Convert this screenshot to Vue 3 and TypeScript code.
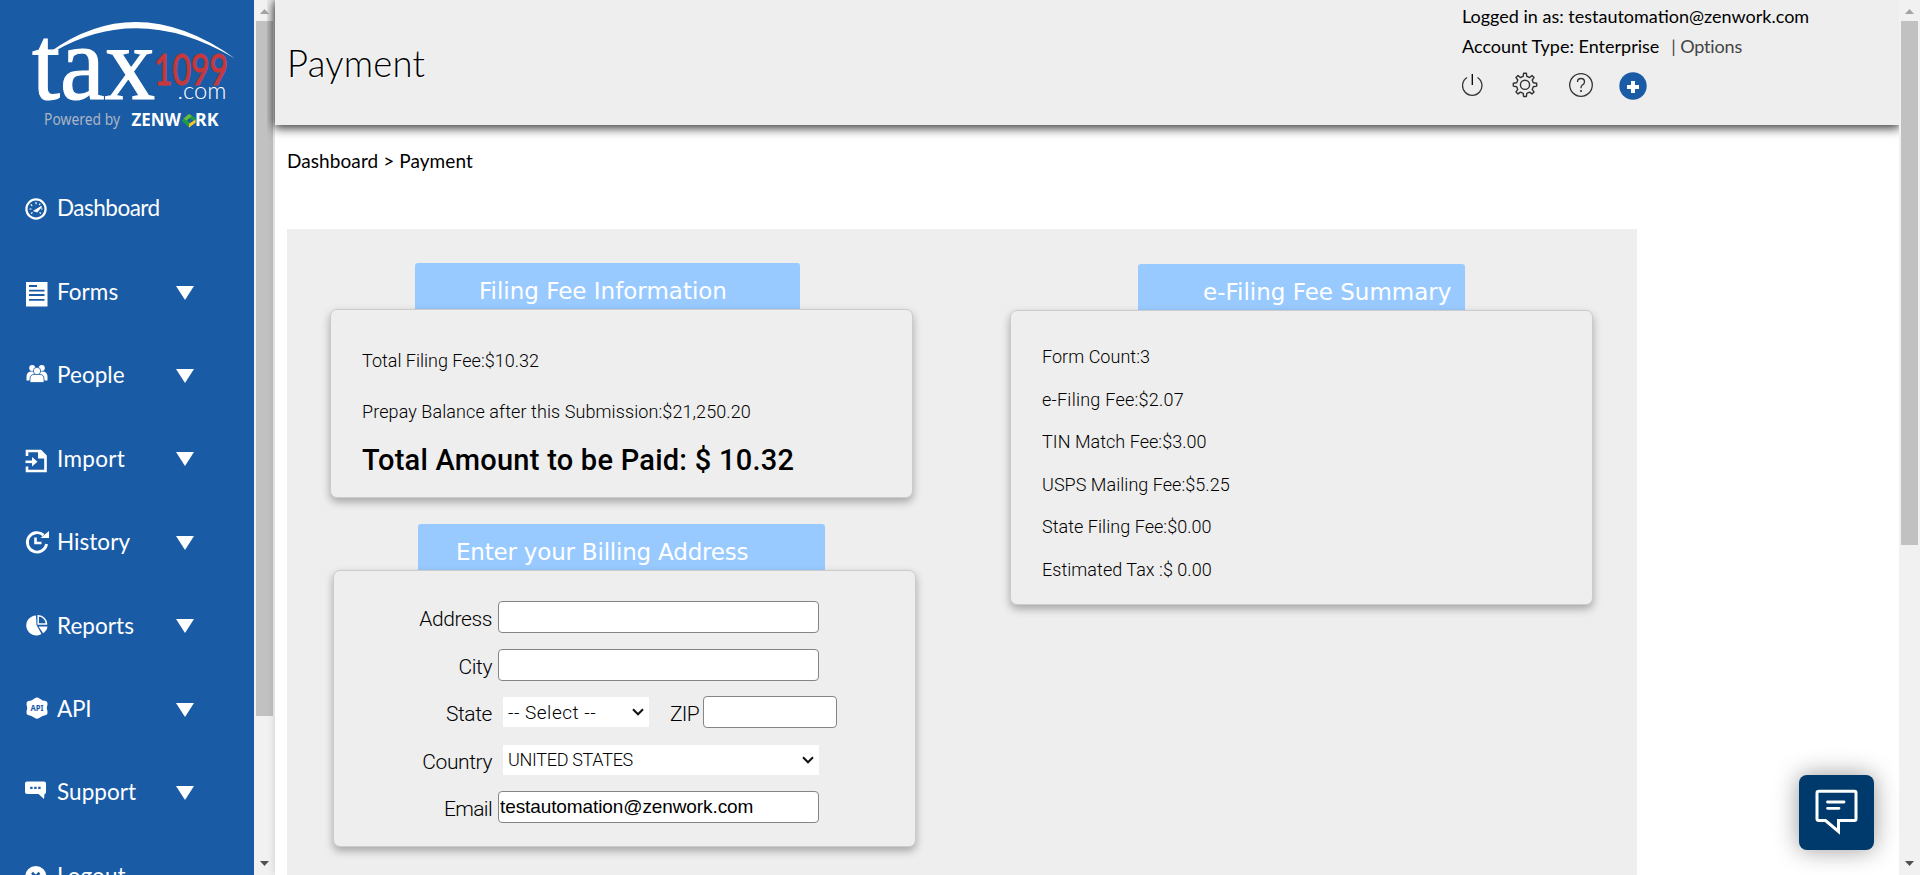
<script setup lang="ts">
import { ref } from 'vue'

interface NavItem { label: string; icon: string; open: boolean }

const nav: NavItem[] = [
  { label: 'Dashboard', icon: 'gauge', open: false },
  { label: 'Forms', icon: 'forms', open: true },
  { label: 'People', icon: 'people', open: true },
  { label: 'Import', icon: 'import', open: true },
  { label: 'History', icon: 'history', open: true },
  { label: 'Reports', icon: 'reports', open: true },
  { label: 'API', icon: 'api', open: true },
  { label: 'Support', icon: 'support', open: true },
  { label: 'Logout', icon: 'logout', open: false },
]

const summary: string[] = [
  'Form Count:3',
  'e-Filing Fee:$2.07',
  'TIN Match Fee:$3.00',
  'USPS Mailing Fee:$5.25',
  'State Filing Fee:$0.00',
  'Estimated Tax :$ 0.00',
]

const address = ref('')
const city = ref('')
const zip = ref('')
const state = ref('-- Select --')
const country = ref('UNITED STATES')
const email = ref('testautomation@zenwork.com')
</script>

<template>
  <div class="page">
    <aside class="sidebar">
      <svg class="logo" width="254" height="166" viewBox="0 0 254 166">
        <path d="M50 52 Q138 -11 235 58.500 Q140 2 55 51 Z" fill="#fff" />
        <text x="32" y="98.500" class="logo-tax" textLength="123" lengthAdjust="spacingAndGlyphs">tax</text>
        <text x="154" y="85" class="logo-num" textLength="74" lengthAdjust="spacingAndGlyphs">1099</text>
        <text x="177.500" y="99" class="logo-com" textLength="49" lengthAdjust="spacingAndGlyphs">.com</text>
        <text x="44" y="125" class="logo-by" textLength="76" lengthAdjust="spacingAndGlyphs">Powered by</text>
        <text x="131.500" y="126" class="logo-zen" textLength="49.500" lengthAdjust="spacingAndGlyphs">ZENW</text>
        <text x="195" y="126" class="logo-zen" textLength="23.500" lengthAdjust="spacingAndGlyphs">RK</text>
        <path d="M181.500 120.500 L189 114 L195.500 118 V122 L189 118 L187 120.500 L190 123 L189 127.500 Z" fill="#1f9a45" />
        <path d="M183.500 118.500 L189 114 L192 116 L186.500 120.500 Z" fill="#6dbb3c" />
        <path d="M195.500 119.500 V122.800 L189 127.800 V123.800 Z" fill="#f5c526" />
      </svg>
      <nav>
        <a v-for="item in nav" :key="item.label" class="nav-row">
          <svg class="nav-icon" width="26" height="28" viewBox="0 0 26 28">
            <g v-if="item.icon === 'gauge'">
              <circle cx="12" cy="15" r="9.600" fill="none" stroke="#fff" stroke-width="2.200" />
              <path d="M10.500 16.800 L17.500 12.500 L13 17.600 Z" fill="#fff" stroke="#fff" stroke-width="1.400" />
              <path d="M5.500 15h2M6.800 10.500l1.400 1.200M12 8v2.200M16.200 9.600l-1 1.400M7 19.500l1.500-1M17 19.500l-1.500-1M18.500 15h-1.500" stroke="#fff" stroke-width="1.200" />
            </g>
            <g v-else-if="item.icon === 'forms'">
              <rect x="2" y="5" width="21.500" height="24.500" fill="#fff" />
              <path d="M5 9h8M5 13.600h15.500M5 18h15.500M5 22.800h15.500" stroke="#1a5ba6" stroke-width="1.800" />
            </g>
            <g v-else-if="item.icon === 'people'" fill="#fff">
              <circle cx="8.200" cy="8" r="3" /><circle cx="17.800" cy="8" r="3" />
              <path d="M2.500 20.500 V17 Q2.500 11.500 7.500 11.500 H18.500 Q23.500 11.500 23.500 17 V20.500 Z" />
              <path d="M6 22.500 V19 Q6 14.500 10 14.500 H16 Q20 14.500 20 19 V22.500 Z" stroke="#1a5ba6" stroke-width=".8" />
              <circle cx="13" cy="11" r="3.700" stroke="#1a5ba6" stroke-width=".8" />
            </g>
            <g v-else-if="item.icon === 'import'">
              <path d="M3 12 V7 H16.500 L21.500 12 V27 H3 V22.500" fill="none" stroke="#fff" stroke-width="2.600" />
              <path d="M14 6 L22.500 14.500 H14 Z" fill="#fff" />
              <path d="M1.500 17.800 H9" stroke="#fff" stroke-width="2.600" />
              <path d="M8 13 L13.500 17.800 L8 22.600 Z" fill="#fff" />
            </g>
            <g v-else-if="item.icon === 'history'">
              <path d="M19.500 8.100 A9.700 9.700 0 1 0 22.600 17" fill="none" stroke="#fff" stroke-width="2.800" />
              <path d="M16.500 11 H25 V4 Z" fill="#fff" />
              <path d="M11.500 10.500 V16 H17.500" fill="none" stroke="#fff" stroke-width="2.600" />
            </g>
            <g v-else-if="item.icon === 'reports'">
              <path d="M12 4.500 A10 10 0 1 0 17.500 23 L12.500 14 Z" fill="#fff" />
              <path d="M14.200 4.700 A8.500 8.500 0 0 1 22.500 13 H14.200 Z" fill="none" stroke="#fff" stroke-width="1.500" />
              <path d="M14.500 15.500 H23.500 Q23 19.500 19.200 22.200 Z" fill="#fff" />
            </g>
            <g v-else-if="item.icon === 'api'">
              <path d="M10.500 4.400 Q13 2.600 15.500 4.400 Q18.500 7 22 7 Q24 8 23.500 10.500 Q22 14 23.500 17.500 Q24 20 22 21 Q18.500 21.500 15.500 23.800 Q13 25.500 10.500 23.800 Q7.500 21.500 4 21 Q2 20 2.500 17.500 Q4 14 2.500 10.500 Q2 8 4 7 Q7.500 7 10.500 4.400 Z" fill="#fff" />
              <text x="6.500" y="17.300" class="api-text" textLength="13" lengthAdjust="spacingAndGlyphs">API</text>
            </g>
            <g v-else-if="item.icon === 'support'">
              <path d="M3 4.500 H20 Q22 4.500 22 6.500 V15 Q22 17 20.500 17 L20 22 L14.500 17 H3 Q1 17 1 15 V6.500 Q1 4.500 3 4.500 Z" fill="#fff" />
              <path d="M6.200 10.800h2.400M10.200 10.800h2.400M14.200 10.800h2.400" stroke="#1a5ba6" stroke-width="2.200" />
            </g>
            <g v-else>
              <circle cx="11.800" cy="15.500" r="10.500" fill="#fff" />
              <path d="M8 11.800 L15.500 19.200 M15.500 11.800 L8 19.200" stroke="#1a5ba6" stroke-width="2.600" />
            </g>
          </svg>
          <span class="nav-label" :class="'label-' + item.icon">{{ item.label }}</span>
          <svg v-if="item.open" class="caret" width="18" height="14" viewBox="0 0 18 14">
            <path d="M0 0 H18 L9 14 Z" fill="#fff" />
          </svg>
        </a>
      </nav>
    </aside>

    <div class="scroll">
      <svg class="sb-arrow" width="9" height="5" viewBox="0 0 9 5"><path d="M0 5 L4.500 0 L9 5Z" fill="#a3a3a3" /></svg>
      <div class="thumb side-thumb"></div>
      <svg class="sb-arrow down" width="9" height="5" viewBox="0 0 9 5"><path d="M0 0 H9 L4.500 5Z" fill="#505050" /></svg>
    </div>

    <main class="content">
      <header class="top">
        <h1>Payment</h1>
        <div class="account">
          <div class="acc-line">Logged in as: testautomation@zenwork.com</div>
          <div class="acc-line second">
            <span>Account Type: Enterprise</span><a class="options">| Options</a>
          </div>
          <div class="tools">
            <svg width="24" height="28" viewBox="0 0 24 28" fill="none" stroke="#333" stroke-width="1.300">
              <path d="M5 6.500 A9.700 9.700 0 1 0 15.500 6.500" /><path d="M10.300 3 V14" stroke="#000" />
            </svg>
            <svg width="28" height="28" viewBox="0 0 28 28" fill="none" stroke="#333" stroke-width="1.400" stroke-linejoin="round">
              <path d="M12.200 5.300 L12.600 2.300 H15.400 L15.800 5.300 L18.600 6.500 L21 4.600 L23 6.600 L21.200 9 L22.300 11.700 L25.700 12.300 V15.100 L22.300 15.700 L21.200 18.400 L23 20.900 L21 22.900 L18.600 21.100 L15.800 22.300 L15.400 25.500 H12.600 L12.200 22.300 L9.400 21.100 L7 22.900 L5 20.900 L6.800 18.400 L5.700 15.700 L2.300 15.100 V12.300 L5.700 11.700 L6.800 9 L5 6.600 L7 4.600 L9.400 6.500 Z" />
              <circle cx="14" cy="13.800" r="4.600" />
            </svg>
            <svg width="28" height="28" viewBox="0 0 28 28" fill="none" stroke="#333" stroke-width="1.300">
              <circle cx="14" cy="14" r="11.300" />
              <path d="M10.500 11 Q10.500 7.500 14 7.500 Q17.500 7.500 17.500 10.700 Q17.500 12.800 15.600 13.800 Q14 14.700 14 16.800 V17.300" />
              <path d="M14 19 V21" stroke-width="1.600" />
            </svg>
            <svg width="28" height="28" viewBox="0 0 28 28">
              <circle cx="14" cy="14" r="13.700" fill="#1a5ba6" />
              <path d="M14 9 V21 M8 15 H20" stroke="#fff" stroke-width="4" />
            </svg>
          </div>
        </div>
      </header>

      <div class="crumbs">Dashboard &gt; Payment</div>

      <section class="panel">
        <div class="left">
          <div class="tab tab-fee">Filing Fee Information</div>
          <div class="card card-fee">
            <p class="fee">Total Filing Fee:$10.32</p>
            <p class="fee prepay">Prepay Balance after this Submission:$21,250.20</p>
            <p class="total">Total Amount to be Paid: $ 10.32</p>
          </div>
          <div class="tab tab-bill">Enter your Billing Address</div>
          <form class="card card-bill" @submit.prevent>
            <div class="row"><label>Address</label><input v-model="address" class="wide" /></div>
            <div class="row"><label>City</label><input v-model="city" class="wide" /></div>
            <div class="row">
              <label>State</label>
              <div class="select state"><span>{{ state }}</span>
                <svg width="12" height="8" viewBox="0 0 12 8"><path d="M1 1.300 L6 6.300 L11 1.300" fill="none" stroke="#111" stroke-width="2" /></svg>
              </div>
              <label class="zip">ZIP</label><input v-model="zip" class="zip-input" />
            </div>
            <div class="row">
              <label>Country</label>
              <div class="select country"><span>{{ country }}</span>
                <svg width="12" height="8" viewBox="0 0 12 8"><path d="M1 1.300 L6 6.300 L11 1.300" fill="none" stroke="#111" stroke-width="2" /></svg>
              </div>
            </div>
            <div class="row"><label class="email">Email</label><input v-model="email" class="wide" /></div>
          </form>
        </div>
        <div class="right">
          <div class="tab tab-sum">e-Filing Fee Summary</div>
          <div class="card card-sum">
            <p v-for="line in summary" :key="line">{{ line }}</p>
          </div>
        </div>
      </section>

      <button class="chat" aria-label="Chat">
        <svg width="75" height="75" viewBox="0 0 75 75" fill="none" stroke="#fff" stroke-width="3" stroke-linecap="round">
          <path d="M20 16.300 H55.500 Q57 16.300 57 18 V44 Q57 45.500 55.500 45.500 H39.500 V56.500 L26.500 45.500 H20 Q18 45.500 18 44 V18 Q18 16.300 20 16.300 Z" stroke-linejoin="miter" />
          <path d="M28.500 27 H45 M28.500 33.300 H40" stroke-width="2.800" />
        </svg>
      </button>
    </main>

    <div class="scroll">
      <svg class="sb-arrow" width="9" height="5" viewBox="0 0 9 5"><path d="M0 5 L4.500 0 L9 5Z" fill="#a3a3a3" /></svg>
      <div class="thumb main-thumb"></div>
      <svg class="sb-arrow down" width="9" height="5" viewBox="0 0 9 5"><path d="M0 0 H9 L4.500 5Z" fill="#505050" /></svg>
    </div>
  </div>
</template>

<style>
html, body { overflow: hidden; background: #fff; }
</style>

<style scoped>
* { box-sizing: border-box; }
p, h1 { margin: 0; font-weight: inherit; white-space: nowrap; }
.page { display: flex; width: 1920px; height: 875px; overflow: hidden; font-family: Lato, sans-serif; color: #000; }

.sidebar { width: 254px; height: 875px; flex: none; background: #1a5ba6; overflow: hidden; }
.logo { display: block; }
.logo-tax { font: 106px "Liberation Serif", serif; fill: #fff; stroke: #fff; stroke-width: 1.2; }
.logo-num { font: 43px Lato, sans-serif; fill: #c6383a; stroke: #c6383a; stroke-width: 1.2; }
.logo-com { font: 300 24px Lato, sans-serif; fill: #fff; }
.logo-by { font: 16px "Noto Sans", sans-serif; fill: #a9b5c4; }
.logo-zen { font: 700 17.500px "Noto Sans", sans-serif; fill: #fff; }
.api-text { font: 700 9px "Noto Sans", sans-serif; fill: #1a5ba6; }
.nav-row { display: flex; align-items: center; height: 83.4px; padding-left: 24px; color: #fff; }
.nav-icon { flex: none; margin-right: 7px; overflow: visible; }
.nav-label { width: 119px; padding-top: 2px; font-size: 22.5px; line-height: 28px; letter-spacing: .05px; }
.label-gauge { padding-top: 1px; letter-spacing: -.5px; }
.label-import { letter-spacing: .3px; }
.label-api { letter-spacing: -.2px; }
.caret { margin-top: 3px; }

.scroll { flex: none; display: flex; flex-direction: column; align-items: center; width: 21px; height: 875px; padding-top: 9px; background: #f1f1f1; }
.sb-arrow { display: block; flex: none; }
.sb-arrow.down { margin-top: auto; margin-bottom: 9px; }
.thumb { width: 17px; margin-top: 7px; background: #c1c1c1; flex: none; }
.side-thumb { height: 695px; }
.main-thumb { height: 524px; }

.content { width: 1624px; height: 875px; flex: none; background: #fff; box-shadow: 0 0 8px rgba(0, 0, 0, .15); clip-path: inset(0 0 0 -8px); }
.top { position: relative; display: flex; height: 125px; background: #eee; box-shadow: 0 2px 10px 1px rgba(0, 0, 0, .8); }
h1 { width: 1187px; padding: 42px 0 0 12px; font-weight: 300; font-size: 36.5px; line-height: 42px; letter-spacing: .2px; text-shadow: 1px 1px 1px #fff; }
.account { padding-top: 4px; }
.acc-line { font-size: 18px; line-height: 24px; white-space: nowrap; }
.second { margin-top: 6px; }
.options { margin-left: 12px; color: #444; letter-spacing: -.15px; }
.tools { display: flex; margin-top: 13px; }
.tools svg:nth-child(2) { margin-left: 25px; }
.tools svg:nth-child(3) { margin-left: 28px; }
.tools svg:nth-child(4) { margin-left: 24px; margin-top: 1px; }

.crumbs { padding: 24px 0 0 12px; height: 104px; font-size: 19px; line-height: 24px; letter-spacing: .08px; }
.panel { display: flex; width: 1350px; height: 660px; margin-left: 12px; background: #eee; }
.left { width: 723px; padding: 34px 0 0 43px; }
.right { padding-top: 35px; }
.tab { height: 46px; padding-top: 14px; background: #99caff; border-radius: 3px 3px 0 0; color: #fff; font: 23px/28px "DejaVu Sans", sans-serif; white-space: nowrap; }
.tab-fee { width: 385px; margin-left: 85px; padding-left: 64px; }
.tab-bill { width: 407px; margin: 26px 0 0 88px; padding-left: 38px; letter-spacing: -.2px; }
.tab-sum { width: 327px; margin-left: 128px; padding-left: 65px; }
.card { position: relative; width: 583px; background: #eee; border: 1px solid #ccc; border-radius: 7px; box-shadow: 0 4px 8px rgba(0, 0, 0, .3); font-family: Roboto, "Open Sans", sans-serif; font-weight: 300; }
.card-fee { height: 189px; padding: 39px 0 0 31px; }
.fee { font-size: 18px; line-height: 24px; }
.prepay { margin-top: 27px; letter-spacing: .09px; }
.total { margin-top: 16px; font-size: 29px; line-height: 40px; font-weight: 500; letter-spacing: .25px; }
.card-bill { height: 277px; margin-left: 3px; padding-top: 26px; display: flex; flex-direction: column; align-items: flex-start; }
.row { display: flex; align-items: center; height: 47.500px; padding-bottom: 7px; }
label { width: 158px; margin-right: 6px; padding-top: 4px; text-align: right; font-size: 21px; line-height: 26px; letter-spacing: -.4px; }
label.email { letter-spacing: -.65px; }
label.zip { width: 50px; margin-right: 4px; letter-spacing: -.7px; }
input { height: 32px; padding: 0 0 0 1px; border: 1px solid #858585; border-radius: 4px; background: #fff; color: #000; font: 19px "Liberation Sans", sans-serif; letter-spacing: -.1px; outline: 0; }
.wide { width: 321px; }
.zip-input { width: 134px; }
.select { display: flex; align-items: center; justify-content: space-between; height: 30px; margin-left: 5px; padding: 0 5px 0 5px; background: #fff; font-size: 18px; white-space: nowrap; }
.state { width: 146px; font-size: 19px; letter-spacing: .5px; }
.country { width: 316px; letter-spacing: -.3px; }
.card-sum { height: 295px; padding: 33px 0 0 31px; font-size: 18px; }
.card-sum p { height: 42.600px; line-height: 26px; letter-spacing: .04px; }
.card-sum p:nth-child(2) { letter-spacing: .25px; }

.chat { position: absolute; left: 1799px; top: 775px; width: 75px; height: 75px; padding: 0; border: 0; border-radius: 8px; background: #003a6c; box-shadow: 0 0 25px rgba(0, 0, 0, .4); }
.chat svg { display: block; }
</style>
